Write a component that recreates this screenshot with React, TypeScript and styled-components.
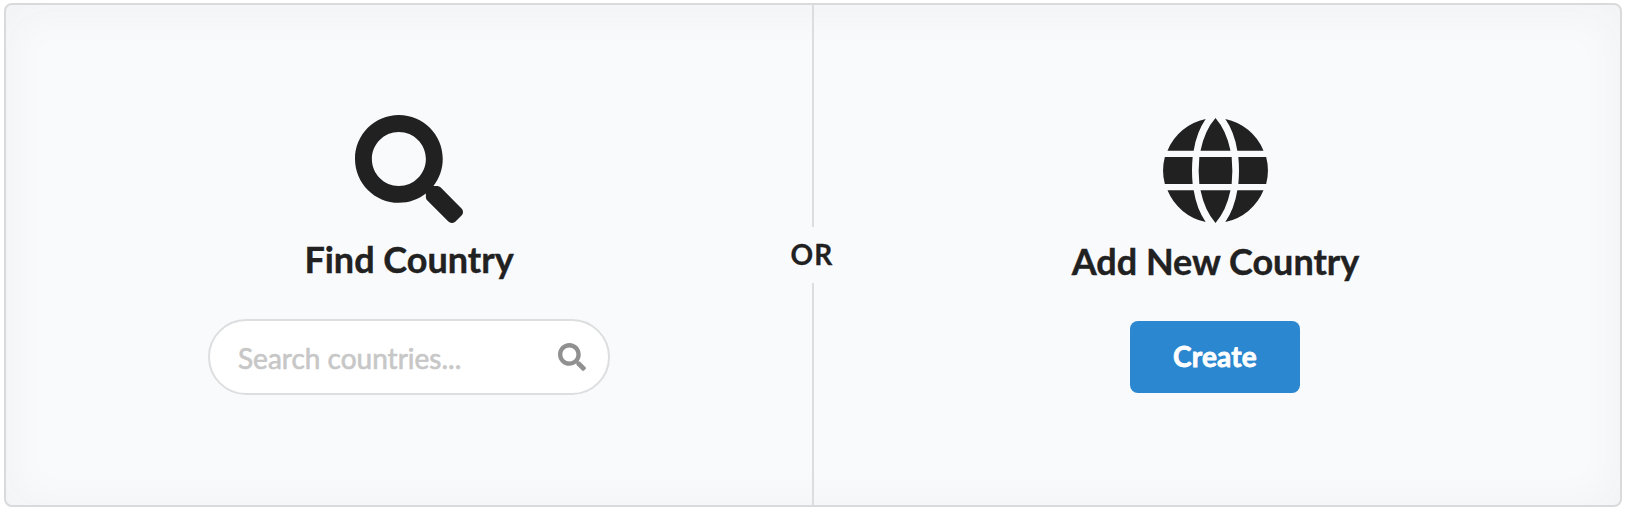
import React from "react";
import styled, { createGlobalStyle } from "styled-components";

const GlobalStyle = createGlobalStyle`
  *, *::before, *::after { box-sizing: border-box; }
  body { margin: 0; background: #fff; font-family: Lato, "Liberation Sans", sans-serif; color: #212121; }
`;

const Page = styled.main`
  padding: 3px 7px 10px 4px;
`;

const Segment = styled.section`
  display: grid;
  grid-template-columns: 806px 2px 806px;
  width: 1618px;
  height: 504px;
  border: 2px solid #d9dadb;
  border-radius: 8px;
  background: #f9fafc;
  box-shadow: inset 0 4px 46px rgba(34, 36, 38, 0.045);
`;

const Column = styled.div<{ $top: number; $shift?: number }>`
  display: flex;
  flex-direction: column;
  align-items: center;
  padding-top: ${(p) => p.$top}px;
  padding-right: ${(p) => p.$shift ?? 0}px;
`;

const Title = styled.h3<{ $before: number; $after: number }>`
  margin: ${(p) => p.$before}px 0 ${(p) => p.$after}px;
  font-size: 36px;
  line-height: 46px;
  font-weight: 700;
  white-space: nowrap;
  -webkit-text-stroke: 0.4px currentColor;
`;

const Divider = styled.div`
  display: flex;
  flex-direction: column;
  align-items: center;
  width: 2px;
`;

const Rule = styled.span<{ $height?: number }>`
  width: 2px;
  flex: ${(p) => (p.$height ? `0 0 ${p.$height}px` : "1")};
  background: #dcddde;
`;

const Or = styled.span`
  flex: 0 0 56px;
  line-height: 54px;
  margin-right: 2px;
  font-size: 28px;
  font-weight: 700;
  letter-spacing: 1.2px;
  -webkit-text-stroke: 0.3px currentColor;
`;

const SearchBox = styled.label`
  display: flex;
  align-items: center;
  width: 402px;
  height: 76px;
  padding: 0 22px 1px 28px;
  border: 2px solid #dddedf;
  border-radius: 38px;
  background: #fff;
  color: #909090;
`;

const SearchInput = styled.input`
  flex: 1;
  min-width: 0;
  padding: 3px 0 0;
  border: 0;
  outline: 0;
  background: transparent;
  font: 400 28px/34px Lato, "Liberation Sans", sans-serif;
  color: #212121;
  &::placeholder { color: #c7c7c7; opacity: 1; -webkit-text-stroke: 0.6px #c7c7c7; }
`;

const CreateButton = styled.button`
  width: 170px;
  height: 72px;
  margin-right: 1px;
  padding: 0 0 2px;
  border: 0;
  border-radius: 8px;
  background: #2a87d0;
  color: #fff;
  font: 700 28px/28px Lato, "Liberation Sans", sans-serif;
  letter-spacing: 0.2px;
  -webkit-text-stroke: 0.8px currentColor;
`;

const Icon = styled.svg`
  display: block;
  flex: none;
  fill: currentColor;
`;

const SearchIcon = ({ size }: { size: number }) => (
  <Icon width={size} height={size} viewBox="0 0 512 512" aria-hidden="true">
    <path d="M505 442.7L405.3 343c-4.5-4.5-10.6-7-17-7H372c27.6-35.3 44-79.7 44-128C416 93.1 322.9 0 208 0S0 93.1 0 208s93.1 208 208 208c48.3 0 92.7-16.4 128-44v16.3c0 6.4 2.5 12.5 7 17l99.7 99.7c9.4 9.4 24.6 9.4 33.9 0l28.3-28.3c9.4-9.4 9.4-24.6.1-34zM208 336c-70.7 0-128-57.2-128-128 0-70.7 57.2-128 128-128 70.7 0 128 57.2 128 128 0 70.7-57.2 128-128 128z" />
  </Icon>
);

const GlobeIcon = () => (
  <Icon width="105" height="105" viewBox="0 0 315 315" aria-hidden="true">
    <path d="M157.5 0Q190 37 202.5 98h-90Q125 37 157.5 0zM109 117h97q4 40.500 0 81h-97q-4-40.500 0-81zM112.500 217h90Q190 278 157.500 315Q125 278 112.500 217z" />
    <path d="M128 3Q101 42 92 98H13.500A158 158 0 0 1 128 3zM187 3Q214 42 223 98h78.500A158 158 0 0 0 187 3zM5.500 117H89q-4 40.500 0 81H5.500a158 158 0 0 1 0-81zM309.500 117H226q4 40.500 0 81h83.500a158 158 0 0 0 0-81zM13.500 217H92q9 56 36 95A158 158 0 0 1 13.500 217zM301.500 217H223q-9 56-36 95A158 158 0 0 0 301.500 217z" />
  </Icon>
);

export default function App() {
  return (
    <>
      <GlobalStyle />
      <Page>
        <Segment>
          <Column $top={110}>
            <SearchIcon size={108} />
            <Title $before={13} $after={37}>Find Country</Title>
            <SearchBox>
              <SearchInput placeholder="Search countries..." aria-label="Search countries" />
              <SearchIcon size={28} />
            </SearchBox>
          </Column>
          <Divider>
            <Rule $height={222} />
            <Or>OR</Or>
            <Rule />
          </Divider>
          <Column $top={113} $shift={3}>
            <GlobeIcon />
            <Title $before={15} $after={37}>Add New Country</Title>
            <CreateButton type="button">Create</CreateButton>
          </Column>
        </Segment>
      </Page>
    </>
  );
}
